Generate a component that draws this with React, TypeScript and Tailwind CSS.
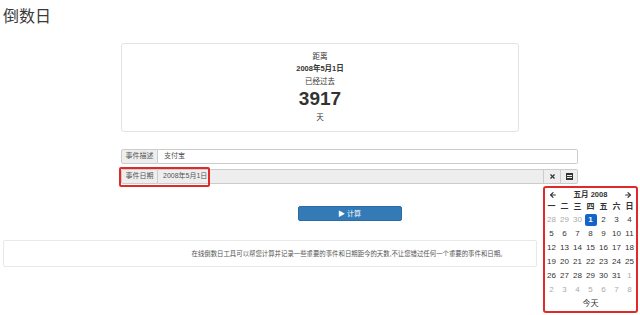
import { ArrowLeft, ArrowRight, X } from "lucide-react";

const weekdays = ["一", "二", "三", "四", "五", "六", "日"];

const days: { d: number; muted?: boolean; active?: boolean }[] = [
  { d: 28, muted: true },
  { d: 29, muted: true },
  { d: 30, muted: true },
  { d: 1, active: true },
  ...Array.from({ length: 30 }, (_, i) => ({ d: i + 2 })),
  ...Array.from({ length: 8 }, (_, i) => ({ d: i + 1, muted: true })),
];

export default function App() {
  return (
    <div className="w-[640px] h-[315px] relative overflow-hidden bg-white text-[#333] font-['Liberation_Sans','Noto_Sans_CJK_SC',sans-serif]">
      <h1 className="pl-[3px] pt-[6px] h-[43px] text-[16px] leading-[22px] font-normal text-[#3a3a3a]">倒数日</h1>

      <div className="ml-[121px] w-[398px] h-[89px] border border-[#e3e3e3] rounded-[3px] flex flex-col items-center pt-[7px] text-[7.5px] leading-[12px]">
        <div>距离</div>
        <div className="font-bold">2008年5月1日</div>
        <div className="mt-[1px]">已经过去</div>
        <div className="text-[19px] leading-[22px] font-bold">3917</div>
        <div className="mt-[2px]">天</div>
      </div>

      <div className="ml-[121px] w-[457px] mt-[17px] text-[7px] text-[#555]">
        <div className="flex h-[15px]">
          <div className="w-[37px] flex items-center justify-center bg-[#eee] border border-[#ccc] rounded-l-[2px]">事件描述</div>
          <div className="flex-1 flex items-center pl-[6px] bg-white border border-l-0 border-[#ccc] rounded-r-[2px]">支付宝</div>
        </div>
        <div className="flex h-[15px] mt-[5px]">
          <div className="w-[37px] flex items-center justify-center bg-[#eee] border border-[#ccc] rounded-l-[2px]">事件日期</div>
          <div className="flex-1 flex items-center pl-[5px] bg-[#eee] border border-l-0 border-[#ccc]">2008年5月1日</div>
          <div className="w-[17px] flex items-center justify-center bg-[#eee] border border-l-0 border-[#ccc]">
            <X size={7} strokeWidth={4} color="#333" />
          </div>
          <div className="w-[17px] flex items-center justify-center bg-[#eee] border border-l-0 border-[#ccc] rounded-r-[2px]">
            <svg width="7" height="7" viewBox="0 0 7 7">
              <rect x="0" y="0" width="7" height="7" fill="#333" />
              <rect x="1" y="2" width="5" height="1" fill="#eee" />
              <rect x="1" y="4" width="5" height="1" fill="#eee" />
            </svg>
          </div>
        </div>
        <button className="block mx-auto mt-[22px] w-[104px] h-[15px] bg-[#337ab7] border border-[#2e6da4] rounded-[2px] text-white text-[7px] leading-[13px]">
          ▶ 计算
        </button>
      </div>

      <div className="ml-[3px] w-[534px] mt-[19px] h-[27px] border border-[#e8e8e8] rounded-[2px] flex items-center justify-center pl-[158px] text-[6.4px] text-[#555]">
        在线倒数日工具可以帮您计算并记录一些重要的事件和日期距今的天数,不让您错过任何一个重要的事件和日期。
      </div>

      <div className="absolute left-[119px] top-[167px] w-[91px] h-[20px] border-2 border-[#e02a2a] rounded-[2px]" />

      <div className="absolute left-[543px] top-[186px] w-[95px] border-2 border-[#e02a2a] rounded-[3px] bg-white pt-[1px] text-[8px]">
        <div className="h-[12px] flex items-center justify-between px-[4px] font-bold">
          <ArrowLeft size={8} strokeWidth={3.5} />
          <span className="text-[7.5px]">五月 2008</span>
          <ArrowRight size={8} strokeWidth={3.5} />
        </div>
        <div className="grid grid-cols-7 h-[12px] items-center text-center font-bold text-[8px]">
          {weekdays.map((w) => (
            <div key={w}>{w}</div>
          ))}
        </div>
        <div className="grid grid-cols-7 text-center text-[8px]">
          {days.map((x, i) => (
            <div key={i} className="h-[14px] flex items-center justify-center">
              {x.active ? (
                <span className="w-[12px] h-[12px] flex items-center justify-center bg-[#1565c8] rounded-[2px] text-white font-bold">
                  {x.d}
                </span>
              ) : (
                <span className={x.muted ? "text-[#aaa]" : "text-[#333]"}>{x.d}</span>
              )}
            </div>
          ))}
        </div>
        <div className="h-[14px] flex items-center justify-center text-[8px]">今天</div>
      </div>
    </div>
  );
}
